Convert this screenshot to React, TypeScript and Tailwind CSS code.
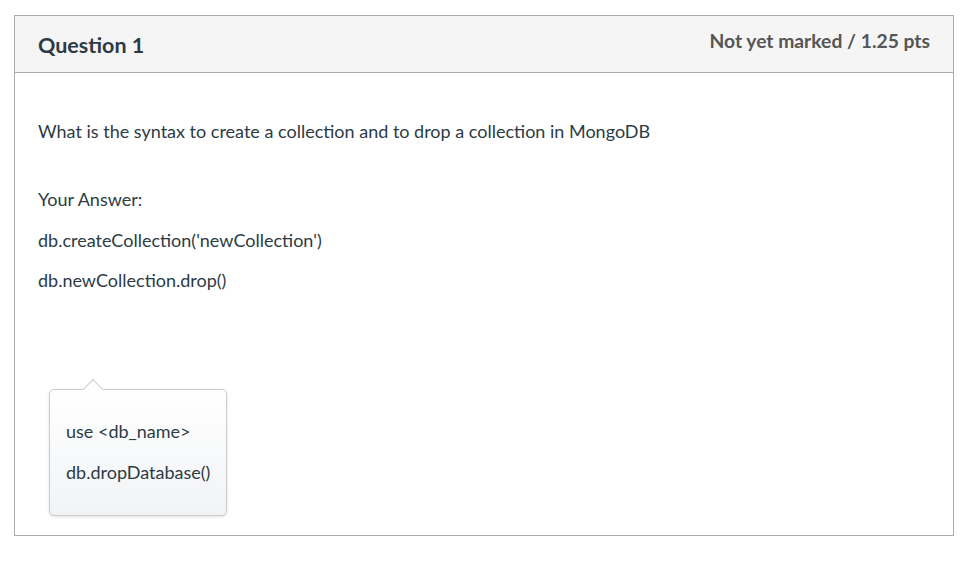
export default function App() {
  return (
    <div className="min-h-screen bg-white pl-[14px] pt-[15px] font-['Lato','Liberation_Sans',sans-serif] text-[#2d3b45]">
      <div className="w-[940px] border border-[#aaaaaa]">
        {/* header */}
        <div className="flex h-[57px] items-start justify-between border-b border-[#aaaaaa] bg-[#f5f5f5] pl-[23px] pr-[23px]">
          <h2 className="mt-[17px] text-[21.5px] font-bold leading-6">Question 1</h2>
          <div className="mt-[14px] text-[19.3px] font-bold leading-[22px] text-[#565656]">
            Not yet marked / 1.25 pts
          </div>
        </div>

        {/* body */}
        <div className="px-[23px] pb-[19px] pt-[46px] text-[18px] leading-6">
          <p>What is the syntax to create a collection and to drop a collection in MongoDB</p>
          <p className="mt-[44px]">Your Answer:</p>
          <p className="mt-[17px]">db.createCollection('newCollection')</p>
          <p className="mt-[16px]">db.newCollection.drop()</p>

          <div className="relative ml-[11px] mt-[97px] w-[178px] rounded-[5px] border border-[#c7cdd1] bg-gradient-to-b from-white to-[#f1f3f5] px-4 pb-[31px] pt-[29px] shadow-[0_1px_3px_rgba(0,0,0,0.12)]">
            <div
              aria-hidden
              className="absolute left-[36px] top-[-8px] h-[14px] w-[14px] rotate-45 border-l border-t border-[#c7cdd1] bg-white"
            />
            <p className="relative">use &lt;db_name&gt;</p>
            <p className="relative mt-[17px]">db.dropDatabase()</p>
          </div>
        </div>
      </div>
    </div>
  );
}
